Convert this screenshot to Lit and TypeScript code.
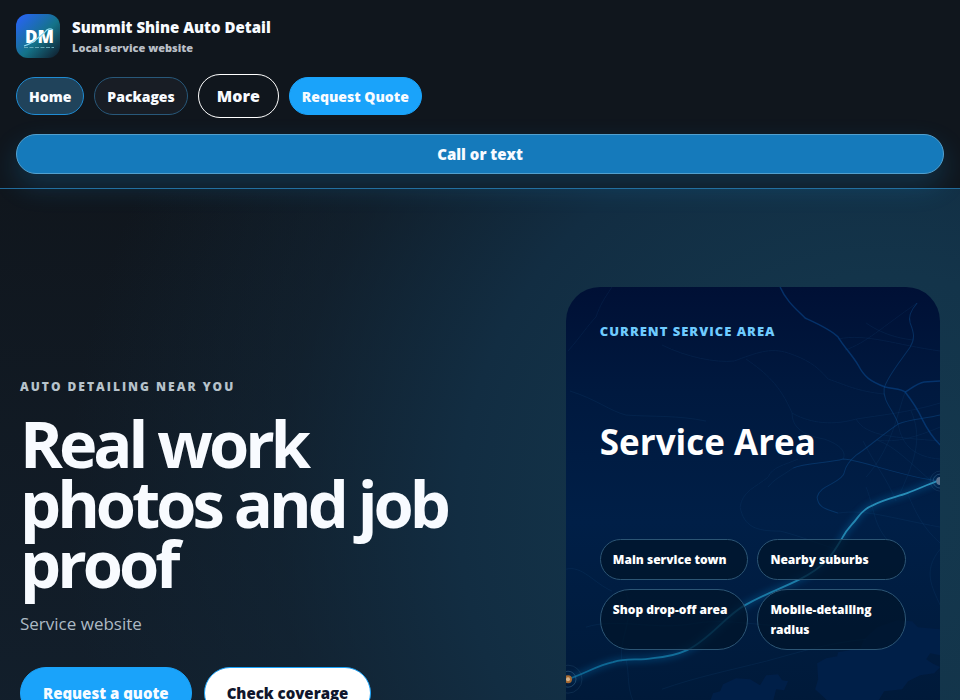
import { LitElement, html, css, svg } from "lit";
import { customElement } from "lit/decorators.js";

const MINOR_ROADS = [
  "M46 0C38 12 34 18 30 30C22 38 16 48 2 64",
  "M4 104C30 112 44 124 60 128C90 130 110 128 140 134",
  "M96 58C120 70 150 76 168 74C190 66 204 60 222 66C240 72 250 78 262 92C280 98 290 104 318 107",
  "M180 72C200 86 214 98 226 126C240 134 262 140 290 132C314 128 340 126 374 116",
  "M226 126C226 140 236 148 258 152C276 158 280 166 277 172",
  "M202 200C208 192 214 190 227 181",
  "M272 52C300 46 330 58 374 64",
  "M279 63C300 56 316 40 351 16",
  "M300 36C320 50 340 52 347 53",
  "M311 153C330 160 344 176 364 193",
  "M297 154C310 180 320 190 330 214",
  "M332 137C336 160 350 170 374 172",
  "M339 105C330 130 326 160 300 190",
  "M374 140C350 150 330 156 311 153",
  "M345 124C356 150 350 170 334 206",
  "M290 132C300 150 330 150 374 154",
  "M272 226C300 222 320 230 374 240",
  "M300 200C310 226 306 240 330 262",
  "M341 206C350 226 356 240 374 256",
  "M174 220C176 204 190 200 202 190C206 180 218 178 232 172",
  "M174 220C178 240 190 244 214 244C240 250 262 262 300 270",
  "M374 262C356 284 366 300 374 318",
  "M0 282C16 278 28 296 46 304",
  "M20 340C50 330 90 344 130 336C170 330 210 344 240 336",
  "M56 375C52 350 70 330 60 306",
  "M60 372C64 390 60 402 70 420",
  "M96 402C130 390 160 384 200 374C230 366 260 356 300 352",
];

const MAIN_ROADS = [
  "M214 0C220 14 230 22 239 31C250 36 264 42 272 50C278 60 286 68 292 78C298 90 304 94 319 100C328 102 336 102 339 105C346 114 351 121 356 132C361 142 366 150 374 158",
  "M339 105C347 100 352 96 358 95L374 94",
];

const SIDE_ROADS = [
  "M351 16C344 24 342 30 344 36C348 46 349 52 344 60C336 72 322 88 318 101C316 114 328 124 332 137",
  "M374 128C358 132 344 132 332 137C318 146 300 162 290 168C276 180 280 184 277 188C270 198 254 198 251 210C252 222 262 222 272 226",
  "M227 181C238 176 264 176 277 172C292 172 330 188 372 194",
];

const ROUTE =
  "M2 392C20 386 32 378 47 375C62 370 72 374 87 371C100 370 110 368 121 363C144 352 160 328 179 318C200 306 214 302 234 292C262 278 268 264 276 251C282 240 286 238 291 231C296 224 302 220 307 218C318 212 330 210 341 206C352 202 360 198 374 193";

@customElement("service-map")
class ServiceMap extends LitElement {
  static styles = css`
    :host { display: block; }
    .map { display: block; width: 100%; height: 100%; }
    .minor { fill: none; stroke: #1c568c; stroke-width: 0.7; opacity: 0.22; }
    .side { fill: none; stroke: #0d4f91; stroke-width: 1; opacity: 0.45; }
    .main { fill: none; stroke: #08468a; stroke-width: 1.5; opacity: 0.6; }
    .water { fill: #001f48; }
    .glow { fill: none; stroke: #0878bd; stroke-width: 6; opacity: 0.3; }
    .route { fill: none; stroke: url(#route); stroke-width: 1.8; }
    .ring { fill: none; stroke: #3f7197; stroke-width: 0.8; opacity: 0.6; }
    .faint { opacity: 0.25; }
    .start { fill: #a5682f; }
    .core { fill: #d5b28b; }
    .end { fill: #5d7390; }
  `;
  render() {
    return html`<svg class="map" viewBox="0 0 374 522" preserveAspectRatio="xMidYMin slice" aria-hidden="true">
      <defs>
        <linearGradient id="land" x1="0" y1="0" x2="0" y2="1">
          <stop offset="0" stop-color="#001035" />
          <stop offset=".2" stop-color="#00193f" />
          <stop offset=".45" stop-color="#001f47" />
          <stop offset=".78" stop-color="#001a3a" />
          <stop offset="1" stop-color="#001430" />
        </linearGradient>
        <linearGradient id="route" x1="0" y1="1" x2="1" y2="0">
          <stop offset="0" stop-color="#0b6490" />
          <stop offset="1" stop-color="#2a91bb" />
        </linearGradient>
        <filter id="soft" x="-10%" y="-10%" width="120%" height="120%"><feGaussianBlur stdDeviation="3" /></filter>
      </defs>
      <rect width="374" height="522" fill="url(#land)" />
      <path class="water" d="M251 376L260 371L271 369L272 365L294 361L298 352L311 340L331 333L346 334L352 340L374 342V368L364 366L360 372L366 376L374 380L368 386L354 388L342 394L336 402L318 404L312 414H262L249 402L252 392Z" />
      <path class="water" d="M144 414L147 406L154 404L157 397L170 391L184 392L194 398L200 388L212 387L216 393L222 394L218 403L210 402L207 414Z" />
      ${MINOR_ROADS.map((d) => svg`<path class="minor" d=${d} />`)}
      ${SIDE_ROADS.map((d) => svg`<path class="side" d=${d} />`)}
      ${MAIN_ROADS.map((d) => svg`<path class="main" d=${d} />`)}
      <path class="glow" filter="url(#soft)" d=${ROUTE} />
      <path class="route" d=${ROUTE} />
      <circle class="ring" cx="2" cy="392" r="8" />
      <circle class="ring faint" cx="2" cy="392" r="14" />
      <circle class="start" cx="2" cy="392" r="4" />
      <circle class="core" cx="2" cy="392" r="2" />
      <circle class="ring" cx="374" cy="194" r="7" />
      <circle class="ring faint" cx="374" cy="194" r="10" />
      <circle class="end" cx="374" cy="194" r="4" />
    </svg>`;
  }
}

@customElement("app-root")
class AppRoot extends LitElement {
  static styles = css`
    :host {
      display: block;
      min-height: 100vh;
      font-family: "Open Sans", "Noto Sans", sans-serif;
      color: #f8fbff;
      background: #10161d;
    }
    * { box-sizing: border-box; }
    a { color: inherit; text-decoration: none; }
    .header {
      position: relative;
      display: grid;
      gap: 16px;
      padding: 14px 16px;
      background: #10161d;
      border-bottom: 1px solid #236a98;
    }
    .brand { display: flex; align-items: center; gap: 12px; }
    .logo { width: 44px; height: 44px; border-radius: 12px; display: block; }
    .mark { font-size: 17px; font-weight: 800; fill: #fff; }
    .names { display: grid; padding-top: 2px; }
    .name { font-size: 15px; line-height: 22px; font-weight: 800; }
    .tag { font-size: 11px; line-height: 20px; font-weight: 800; color: #b9bfc6; }
    .nav { display: flex; flex-wrap: wrap; align-items: center; gap: 10px; }
    .pill {
      display: flex;
      align-items: center;
      height: 38px;
      padding: 0 12px;
      border: 1px solid #28587a;
      border-radius: 999px;
      background: #181d25;
      font: inherit;
      font-size: 14px;
      font-weight: 800;
      color: inherit;
    }
    .current { background: #20435b; border-color: #1f8cd4; }
    .more { height: 44px; padding: 0 18px; border-color: #fff; background: transparent; font-size: 16px; }
    .quote { background: #1aa3fa; border-color: #1aa3fa; }
    .call {
      display: flex;
      align-items: center;
      justify-content: center;
      height: 40px;
      border: 1px solid #53a0ce;
      border-radius: 999px;
      background: #157abb;
      font-size: 15px;
      font-weight: 800;
      box-shadow: 0 12px 28px rgba(26, 163, 250, 0.2);
    }
    .hero {
      display: grid;
      grid-template-columns: minmax(0, 7fr) minmax(0, 5fr);
      gap: 22px;
      align-items: center;
      padding: 98px 20px;
      background:
        radial-gradient(ellipse 85% 110% at 92% 45%, #14384e 0%, #13344a 30%, #122d42 52%, rgba(18, 40, 58, 0.5) 74%, rgba(16, 22, 29, 0) 100%),
        linear-gradient(180deg, #10161d, #132231);
    }
    .intro { display: grid; justify-items: start; }
    .eyebrow {
      margin: 0;
      font-size: 12px;
      line-height: 20px;
      font-weight: 800;
      letter-spacing: 2px;
      text-transform: uppercase;
      color: #b7c3cb;
    }
    .title {
      margin: 16px 0 0;
      max-width: 480px;
      font-size: 65px;
      line-height: 60px;
      font-weight: 700;
      letter-spacing: -4px;
    }
    .sub { margin: 18px 0 0; font-size: 17px; line-height: 26px; color: #adbac4; }
    .actions { display: flex; flex-wrap: wrap; gap: 12px; margin-top: 30px; }
    .action {
      display: flex;
      align-items: center;
      height: 52px;
      padding: 0 22px;
      border: 1px solid #1aa3fa;
      border-radius: 999px;
      background: #1aa3fa;
      font-size: 15px;
      font-weight: 800;
    }
    .light { background: #fff; color: #10162c; }
    .card {
      position: relative;
      min-height: 522px;
      padding: 34px;
      border-radius: 34px;
      overflow: hidden;
    }
    .backdrop { position: absolute; inset: 0; }
    .body { position: relative; }
    .area { font-size: 13px; letter-spacing: 1px; color: #6fcbff; }
    .place { margin: 76px 0 0; font-size: 35px; line-height: 50px; font-weight: 700; color: #fff; }
    .chips {
      display: grid;
      grid-template-columns: 1fr 1fr;
      gap: 9px;
      margin: 72px 0 0;
      padding: 0;
      list-style: none;
    }
    .chip {
      padding: 10px 12px 9px;
      border: 1px solid #2c5574;
      border-radius: 30px;
      background: rgba(0, 21, 42, 0.72);
      font-size: 12px;
      line-height: 20px;
      font-weight: 800;
      color: #fff;
    }
  `;
  render() {
    return html`
      <header class="header">
        <a class="brand" href="#">
          <svg class="logo" viewBox="0 0 44 44" aria-hidden="true">
            <defs>
              <linearGradient id="badge" x1="0" y1="0" x2="1" y2="1">
                <stop offset="0" stop-color="#2a62ff" />
                <stop offset=".55" stop-color="#147389" />
                <stop offset="1" stop-color="#101827" />
              </linearGradient>
            </defs>
            <rect width="44" height="44" fill="url(#badge)" />
            <text class="mark" x="9" y="29">DM</text>
            <path d="M8 32C18 29 24 22 29 18C31 15 34 14 37 16" fill="none" stroke="#8fdcf2" stroke-width="1.2" />
            <path d="M8 33.5H38" fill="none" stroke="#64a8b8" stroke-width="1" stroke-dasharray="4 1.5" />
          </svg>
          <span class="names">
            <span class="name">Summit Shine Auto Detail</span>
            <span class="tag">Local service website</span>
          </span>
        </a>
        <nav class="nav" aria-label="Main">
          <a class="pill current" href="#home">Home</a>
          <a class="pill" href="#packages">Packages</a>
          <button class="pill more" type="button">More</button>
          <a class="pill quote" href="#quote">Request Quote</a>
        </nav>
        <a class="call" href="#call">Call or text</a>
      </header>
      <main class="hero">
        <section class="intro">
          <p class="eyebrow">Auto detailing near you</p>
          <h1 class="title">Real work photos and job proof</h1>
          <p class="sub">Service website</p>
          <div class="actions">
            <a class="action" href="#quote">Request a quote</a>
            <a class="action light" href="#coverage">Check coverage</a>
          </div>
        </section>
        <section class="card">
          <service-map class="backdrop"></service-map>
          <div class="body">
            <p class="eyebrow area">Current service area</p>
            <h2 class="place">Service Area</h2>
            <ul class="chips">
              <li class="chip">Main service town</li>
              <li class="chip">Nearby suburbs</li>
              <li class="chip">Shop drop-off area</li>
              <li class="chip">Mobile-detailing radius</li>
            </ul>
          </div>
        </section>
      </main>
    `;
  }
}
